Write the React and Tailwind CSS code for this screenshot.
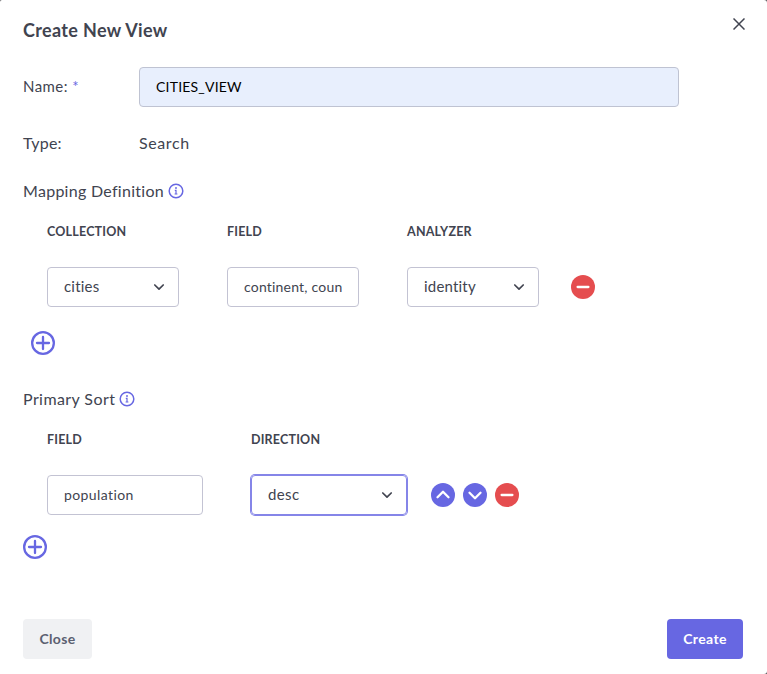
import React from "react";

function InfoIcon() {
  return (
    <svg className="h-4 w-4 shrink-0" viewBox="0 0 16 16" fill="none" stroke="#6767e2">
      <circle cx="8" cy="8" r="6.8" strokeWidth="1.5" />
      <path d="M6.8 7.4H8v3.5M6.6 11h2.8" strokeWidth="1.2" />
      <circle cx="8" cy="5" r="0.95" fill="#6767e2" stroke="none" />
    </svg>
  );
}

function PlusIcon() {
  return (
    <svg className="block h-6 w-6" viewBox="0 0 24 24" fill="none" stroke="#6767e2" strokeWidth="2.3" strokeLinecap="round">
      <circle cx="12" cy="12" r="10.85" />
      <path d="M12 6v12M6 12h12" />
    </svg>
  );
}

function RoundIcon({ fill, d }) {
  return (
    <svg className="block h-6 w-6 shrink-0" viewBox="0 0 24 24" fill="none">
      <circle cx="12" cy="12" r="12" fill={fill} />
      <path d={d} stroke="#fff" strokeWidth="2.3" strokeLinecap="round" strokeLinejoin="round" />
    </svg>
  );
}

function MinusIcon() {
  return <RoundIcon fill="#e54d4f" d="M6.6 12h10.8" />;
}

function Select({ value, className }) {
  return (
    <div className={"flex h-10 items-center justify-between rounded border pl-4 pr-[13px] " + className}>
      <span className="pb-px">{value}</span>
      <svg className="h-3 w-3" viewBox="0 0 12 12" fill="none" stroke="#414450" strokeWidth="1.7" strokeLinecap="round" strokeLinejoin="round">
        <path d="M1.8 4 6 8.2 10.2 4" />
      </svg>
    </div>
  );
}

function Heading({ children, className }) {
  return <div className={"h-4 pt-px text-[12.5px] font-bold leading-4 tracking-[0.2px] " + className}>{children}</div>;
}

export default function App() {
  return (
    <div className="bg-[#5b5b5f]">
      <div className="flex h-[674px] w-[767px] flex-col rounded-tl-[2px] rounded-r-[3px] bg-white pl-[23px] pr-6 font-['Lato',sans-serif] text-[16px] text-[#414450]">
        <header className="flex h-[67px] items-start justify-between pt-[18px]">
          <h1 className="text-[18px] font-bold leading-6 tracking-[0.35px]">Create New View</h1>
          <svg className="-mr-[2px] h-3 w-3" viewBox="0 0 12 12" fill="none" stroke="#414450" strokeWidth="1.5">
            <path d="M.5.5l11 11M11.5.5l-11 11" />
          </svg>
        </header>
        <div className="flex h-10 items-center">
          <label className="w-[116px] pb-0.5 text-[15px] tracking-[0.45px]">
            Name: <span className="text-[#6767e2]">*</span>
          </label>
          <div className="flex h-10 w-[540px] items-center rounded border border-[#bfc3d2] bg-[#e8effd] pl-4 text-[14px] tracking-[0.2px] text-black">
            <span className="pb-0.5">CITIES_VIEW</span>
          </div>
        </div>
        <div className="mt-6 flex h-6 items-center">
          <span className="w-[116px] tracking-[0.2px]">Type:</span>
          <span className="tracking-[0.6px]">Search</span>
        </div>
        <div className="mt-6 flex h-6 items-center gap-1">
          <span className="tracking-[0.28px]">Mapping Definition</span>
          <InfoIcon />
        </div>
        <div className="mt-5 flex pl-6">
          <Heading className="w-[180px]">COLLECTION</Heading>
          <Heading className="w-[180px]">FIELD</Heading>
          <Heading className="w-[180px]">ANALYZER</Heading>
        </div>
        <div className="mt-7 flex items-center pl-6 text-[15px] tracking-[0.2px]">
          <Select value="cities" className="w-[132px] border-[#c3c3d3]" />
          <div className="ml-12 flex h-10 w-[132px] items-center rounded border border-[#c3c3d3] px-4 text-[14px]">
            <span className="w-[99px] overflow-hidden whitespace-nowrap pb-0.5">continent, coun</span>
          </div>
          <Select value="identity" className="ml-12 mr-8 w-[132px] border-[#c3c3d3]" />
          <MinusIcon />
        </div>
        <div className="mt-6 pl-2">
          <PlusIcon />
        </div>
        <div className="mt-8 flex h-6 items-center gap-1">
          <span className="tracking-[0.42px]">Primary Sort</span>
          <InfoIcon />
        </div>
        <div className="mt-5 flex pl-6">
          <Heading className="w-[204px]">FIELD</Heading>
          <Heading>DIRECTION</Heading>
        </div>
        <div className="mt-7 flex items-center pl-6 text-[15px] tracking-[0.4px]">
          <div className="flex h-10 w-[156px] items-center rounded border border-[#c3c3d3] px-4 text-[14px]">
            <span className="pb-0.5">population</span>
          </div>
          <Select value="desc" className="ml-12 mr-6 w-[156px] border-[#8585e8] ring-1 ring-[#8585e8]" />
          <div className="flex gap-2">
            <RoundIcon fill="#6767e2" d="M6.5 14.3 12 8.8l5.5 5.5" />
            <RoundIcon fill="#6767e2" d="M6.5 9.8 12 15.3l5.5-5.5" />
            <MinusIcon />
          </div>
        </div>
        <div className="mt-5">
          <PlusIcon />
        </div>
        <footer className="mt-[60px] flex justify-between text-[14px] font-bold tracking-[0.35px]">
          <button className="h-10 w-[69px] rounded bg-[#f0f1f3] pb-0.5 text-[#5b6070]">Close</button>
          <button className="h-10 w-[76px] rounded bg-[#6767e2] pb-0.5 text-white">Create</button>
        </footer>
      </div>
    </div>
  );
}
